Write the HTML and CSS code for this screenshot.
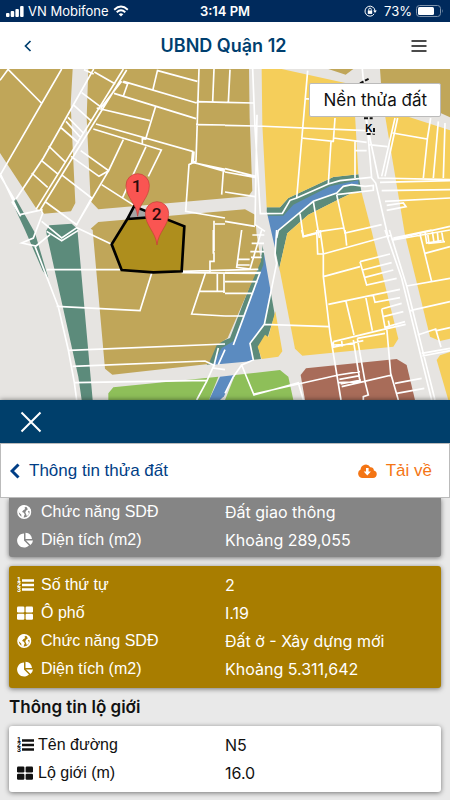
FILE: index.html
```html
<!DOCTYPE html>
<html lang="vi">
<head>
  <meta charset="UTF-8">
  <meta name="viewport" content="width=device-width, initial-scale=1.0">
  <title>UBND Quận 12</title>
  <link rel="stylesheet" href="styles.css">
</head>
<body>
  <svg class="sprite" aria-hidden="true">
    <symbol id="icon-list" viewBox="0 0 17 16">
      <g font-family="Liberation Sans" font-weight="bold" font-size="7" fill="currentColor">
        <text x="0" y="5">1</text><text x="0" y="10">2</text><text x="0" y="15">3</text>
      </g>
      <path d="M5 3.500h12M5 8h12M5 12.500h12" stroke="currentColor" stroke-width="2.400"/>
    </symbol>
    <symbol id="icon-grid" viewBox="0 0 17 16">
      <g fill="currentColor">
        <rect x="0" y="1.500" width="7.400" height="6" rx="1.200"/><rect x="8.600" y="1.500" width="7.400" height="6" rx="1.200"/>
        <rect x="0" y="8.700" width="7.400" height="6" rx="1.200"/><rect x="8.600" y="8.700" width="7.400" height="6" rx="1.200"/>
      </g>
    </symbol>
    <symbol id="icon-globe" viewBox="0 0 17 16">
      <circle cx="7.200" cy="8" r="6.200" fill="none" stroke="currentColor" stroke-width="1.600"/>
      <path d="M1.500 5.500Q3 1.500 7.500 1.300L9 2.800 7.400 3.700 8.300 5 6.300 6.200 5 8 6.500 8.500 7.800 10.200 7 12 6.600 13.800 4.500 13 4.200 10.500 2.200 8.800ZM10 3l2.500.6 1.300 2.200-.5 1.700-1.500-.7-1 .9 1.200 1.200-.5 2-1.700 1-.8-1.800L8.300 8.500 9 6.700l1.700-1.200Z" fill="currentColor"/>
    </symbol>
    <symbol id="icon-pie" viewBox="0 0 17 16">
      <path d="M7 1.500V8.500L12 13.500A7 7 0 1 1 7 1.500Z" fill="currentColor"/>
      <path d="M8.500 .8A7 7 0 0 1 15 7H8.500Z" fill="currentColor"/>
      <path d="M9 8.500H16A7 7 0 0 1 13.500 13Z" fill="currentColor"/>
    </symbol>
    <symbol id="icon-chevron" viewBox="0 0 10 16">
      <path d="M8.500 1.500 2 8l6.500 6.500" fill="none" stroke="currentColor" stroke-width="3"/>
    </symbol>
  </svg>

  <div class="app">
    <div class="status-bar">
      <div class="status-left">
        <svg class="signal" viewBox="0 0 18 11" aria-hidden="true">
          <g fill="#fff">
            <rect x="0" y="7" width="3.500" height="4" rx="1"/><rect x="4.700" y="5" width="3.500" height="6" rx="1"/>
            <rect x="9.400" y="3" width="3.500" height="8" rx="1"/><rect x="14.100" y="0" width="3.500" height="11" rx="1"/>
          </g>
        </svg>
        <span>VN Mobifone</span>
        <svg class="wifi" viewBox="0 0 16 12" aria-hidden="true">
          <path d="M1.200 4.700Q8-1.500 14.800 4.700M3.700 7.300Q8 3.300 12.300 7.300" fill="none" stroke="#fff" stroke-width="1.900"/>
          <path d="M5.700 9.200Q8 7.400 10.300 9.200L8 11.600Z" fill="#fff"/>
        </svg>
      </div>
      <span class="status-time">3:14 PM</span>
      <div class="status-right">
        <svg class="lock" viewBox="0 0 13 12" aria-hidden="true">
          <path d="M10.200 8.900A5 5 0 1 1 11 6" fill="none" stroke="#fff" stroke-width="1"/>
          <path d="M9.200 5.500h3.600L11 8Z" fill="#fff"/>
          <rect x="3.800" y="5.500" width="4.400" height="3.400" fill="#fff"/>
          <path d="M4.700 5.700V4.400a1.300 1.300 0 0 1 2.600 0v1.300" fill="none" stroke="#fff" stroke-width=".9"/>
        </svg>
        <span>73%</span>
        <svg class="battery" viewBox="0 0 28 12" aria-hidden="true">
          <rect x=".5" y=".5" width="24" height="11" rx="3" fill="none" stroke="#7f93ab"/>
          <rect x="2" y="2" width="16" height="8" rx="1.500" fill="#fff"/>
          <path d="M26 4q1.500 2 0 4Z" fill="#7f93ab"/>
        </svg>
      </div>
    </div>

    <header class="header">
      <button class="icon-button" aria-label="Quay lại">
        <svg width="16" height="16" viewBox="0 0 16 16"><path d="M10.500 3 5.500 8l5 5" fill="none" stroke="#003f6f" stroke-width="1.700"/></svg>
      </button>
      <h1>UBND Quận 12</h1>
      <button class="icon-button" aria-label="Menu">
        <svg width="16" height="16" viewBox="0 0 16 16"><path d="M.5 3h15M.5 8h15M.5 13h15" stroke="#111" stroke-width="1.500"/></svg>
      </button>
    </header>

    <div class="map">
      <svg class="map-canvas" viewBox="0 3 1350 993" preserveAspectRatio="xMidYMid slice" aria-hidden="true">
        <rect y="3" width="1350" height="993" fill="#e6e4e1"/>

        <!-- river banks and water -->
        <g fill="#5c8b7b">
          <path d="M800 418H840L865 390 1000 327 1075 319 1085 374 1055 376 1020 392 925 440 862 496 838 600 828 730 803 808 775 836 783 873 620 890 650 826 690 810 785 560Z"/>
          <path d="M35 400 48 393 105 495 145 631 128 608 75 486Z"/>
          <path d="M138 490 148 472 215 467 232 482 278 996H245L235 926Z"/>
        </g>
        <path d="M800 443H850L880 410 990 355 1075 337V349L1028 353 1010 373 940 400 900 430 835 485 826 550 830 586 815 666 790 771 750 826 760 879 638 890 665 840 700 820 790 590Z" fill="#5b8bc0"/>
        <path d="M660 926 705 921 672 985 660 996H627Z" fill="#5b8bc0"/>
        <path d="M747 3H785L800 430 825 540 885 842 910 866 847 870 790 545 765 445Z" fill="#e6e4e1"/>

        <!-- land use zones -->
        <g fill="#c0a659">
          <path d="M0 3H218L212 110 226 405 213 430 132 437 108 420 0 255Z"/>
          <path d="M265 3H747L749 150 757 368 745 385 295 424 272 400 260 150Z"/>
          <path d="M272 482 295 462 735 424 765 440 770 500 783 580 683 810 650 832 626 888 337 920 315 902 278 486Z"/>
          <path d="M1140 3H1350V148L1310 130 1145 75ZM985 3H1060L1037 20Z"/>
        </g>
        <g fill="#f5ce5a">
          <path d="M785 3H845L1060 50 1075 319 1000 327 865 390 840 418H800L787 170Z"/>
          <path d="M1153 130 1220 145 1350 187V812L1320 819 1290 806 1215 500Z"/>
          <path d="M1350 852 1320 862 1310 876 1345 996H1350Z"/>
          <path d="M1085 374 1055 376 1020 392 925 440 862 496 838 600 885 842 907 863 1180 836 1195 812 1115 490Z"/>
          <path d="M826 730 847 850 835 866 785 873 773 836 795 800 805 807Z"/>
        </g>
        <path d="M340 958 655 926 627 996H325V976ZM705 921 840 906 865 926 880 996H675Z" fill="#8ebf59"/>
        <path d="M915 996 902 921 918 901 1190 873 1220 891 1245 996Z" fill="#a86c59"/>

        <!-- parcel borders -->
        <g fill="none" stroke="#fff" stroke-width="5">
          <path d="M0 37 25 3M25 5 124 105M185 3 0 322 45 397M0 315 62 445 35 400M281 3 130 270 48 393M370 3 108 424M380 6 122 424 128 436 100 510 65 525 108 534 150 500M245 74 304 118 365 40M222 112 275 160M283 12 346 48M252 5 281 18M204 148 250 195M198 160 240 207M184 180 236 225M146 234 197 283M124 277 172 317M95 315 143 358M137 402 230 470 275 390M213 265 297 325 326 308M187 322 275 390M242 248 326 308 370 215M230 470 326 308M280 183 484 246 445 325M288 168 578 250 575 283 675 304M305 350 402 412M438 236 368 388M290 120 450 158M342 76 588 152M370 40 590 105M368 42 383 47 370 84M473 5 458 68M473 8 592 40M467 115 437 213 427 212V226M597 3 588 280 567 290 557 430 675 450M588 170 675 171M590 101 675 103M642 3 638 101M582 250 580 283 675 310M670 310 665 380M642 458V550M645 468H675"/>
          <path d="M60 440 128 425M125 460 185 510 232 478M140 490 185 518 235 487M105 535 175 717 205 846 223 944 230 996M232 480 335 529M140 605H365M545 610 775 604M545 614 780 616M170 715 420 728 455 616M616 616 575 738 675 744M600 670H675M652 616V670M672 616V675M640 486V555H642V580H630V612M208 847 675 828M218 895 615 879 645 893M225 944 620 937M645 885 620 940 590 996M655 840 640 900 675 905M675 845 655 890"/>
          <path d="M15 5 10 103M0 103 85 105M0 172 97 174 425 188M83 3 90 180 106 437 172 436 195 397 215 390 310 348 345 338 437 328M96 140 90 470 120 490M248 8 215 390M240 92 265 94M228 210 325 220 330 150M325 210 425 223M318 220 310 348M390 220V330M390 248H425M412 3 440 330 452 345 490 510M422 150 460 330 675 335M0 302 93 325M0 312 90 328M0 372 90 386M510 150 470 325M518 150 480 325M503 195 607 213 617 150M430 230 487 236M607 213 595 330M640 160 625 330M660 165 655 330M465 343 675 338M470 368 675 365M480 400 675 390M485 412 535 405 543 416 485 427M155 510 160 487 225 433 265 400 335 375 355 355 380 350 420 355 445 352V367L335 380M225 437 235 505 290 490M265 400 283 510M335 380 360 495 470 470M285 490 355 480M500 515 675 475M600 490 605 525 650 518M0 460 90 475" transform="translate(675)"/>
          <path d="M50 0 35 112 75 117 110 0M82 15H118M80 40H117M76 65H118M78 82H110M40 88H74M38 105H74M0 128H105L25 345M0 155H98M0 190H85M0 258H58M155 0 150 75 155 100 118 283 75 340 85 390 50 405 87 495 220 458 235 510M25 440 0 490M50 405 25 440M118 283 312 290M285 0 295 70 295 140 315 310 348 510M230 0 235 20 275 10M275 0 278 72 295 72 500 15M360 0 365 47M295 140 405 110M405 95 495 72M405 95 425 165 515 145M413 120 500 98M420 142 505 120M310 223 525 178M362 210 387 315M422 200 442 302M445 197 450 217 525 203M470 237 530 220M470 237 480 292 540 275M475 260 535 245M490 272 493 286M325 335 460 302 542 283M325 335V352L415 332M327 345 390 342M350 333 352 350M397 325 480 310M485 292 497 430 520 510M385 330 405 455 340 458M397 325 420 455 430 495 415 500V510M87 492 340 435 405 425M350 470 415 455 500 435M343 448 405 437M347 462 408 450M510 460 590 445M515 490 598 475M480 0 530 145 620 510M493 0 545 168 595 370 630 510M505 30 675 0M505 24 620 0M585 12 620 155M600 70 675 50M608 10 612 40 660 35M622 5 627 37M637 5 640 37M650 5 655 35M545 168 675 145M555 242 675 215M578 315 632 297 648 352M635 302 675 293M590 370 675 355M592 378 675 362" transform="translate(675 486)"/>
        </g>

        <!-- street name -->
        <g stroke="#111" stroke-width="6" stroke-dasharray="12 5">
          <path d="M1080 46 1107 32M1092 151H1118M1100 198H1118M1122 180V200"/>
        </g>
        <text class="street-name" x="1096" y="192">K</text>

        <!-- selected parcel -->
        <path d="M382 453 335 529 365 606 460 613 545 610 553 475 402 415Z" fill="#ae8e1d"/>
        <path d="M402 415 480 446 382 453Z" fill="#a5a5a5"/>
        <path d="M382 453 335 529 365 606 460 613 545 610 553 475 402 415ZM382 453 480 446" fill="none" stroke="#000" stroke-width="8"/>

        <g stroke="#c43c38" stroke-width="2" fill="#fa5552">
          <path d="M413 445C409 405 378 390 378 352A35 35 0 0 1 448 352C448 390 417 405 413 445Z"/>
          <path d="M471 531C467 491 436 474 436 436A35 35 0 0 1 506 436C506 474 475 491 471 531Z"/>
        </g>
        <text class="pin-label" x="410" y="373">1</text>
        <text class="pin-label" x="470" y="456">2</text>
      </svg>
      <button class="layer-button">Nền thửa đất</button>
    </div>

    <section class="panel">
      <div class="panel-bar">
        <button class="close-button" aria-label="Đóng">
          <svg width="22" height="22" viewBox="0 0 22 22"><path d="M1.500 1.500l19 19M20.500 1.500l-19 19" stroke="#fff" stroke-width="2"/></svg>
        </button>
      </div>
      <div class="panel-header">
        <a class="back-link" href="#">
          <svg width="10" height="16"><use href="#icon-chevron"/></svg>
          Thông tin thửa đất
        </a>
        <a class="download-link" href="#">
          <svg width="19" height="14" viewBox="0 0 19 14" aria-hidden="true">
            <path d="M4.500 14A4.500 4.500 0 0 1 2.600 5.500 5.200 5.200 0 0 1 12.300 3.200 3 3 0 0 1 15.800 6.500 3.800 3.800 0 0 1 15 14Z" fill="currentColor"/>
            <path d="M8 4h2.600v3.500h2.300L9.300 11.500 5.700 7.500H8Z" fill="#fff"/>
          </svg>
          Tải về
        </a>
      </div>

      <div class="panel-body">
        <dl class="card card-gray">
          <div class="row">
            <dt><svg class="icon"><use href="#icon-globe"/></svg>Chức năng SDĐ</dt>
            <dd>Đất giao thông</dd>
          </div>
          <div class="row">
            <dt><svg class="icon"><use href="#icon-pie"/></svg>Diện tích (m2)</dt>
            <dd>Khoảng 289,055</dd>
          </div>
        </dl>

        <dl class="card card-gold">
          <div class="row">
            <dt><svg class="icon"><use href="#icon-list"/></svg>Số thứ tự</dt>
            <dd>2</dd>
          </div>
          <div class="row">
            <dt><svg class="icon"><use href="#icon-grid"/></svg>Ô phố</dt>
            <dd>I.19</dd>
          </div>
          <div class="row">
            <dt><svg class="icon"><use href="#icon-globe"/></svg>Chức năng SDĐ</dt>
            <dd>Đất ở - Xây dựng mới</dd>
          </div>
          <div class="row">
            <dt><svg class="icon"><use href="#icon-pie"/></svg>Diện tích (m2)</dt>
            <dd>Khoảng 5.311,642</dd>
          </div>
        </dl>

        <h2>Thông tin lộ giới</h2>

        <dl class="card card-white">
          <div class="row">
            <dt><svg class="icon"><use href="#icon-list"/></svg>Tên đường</dt>
            <dd>N5</dd>
          </div>
          <div class="row">
            <dt><svg class="icon"><use href="#icon-grid"/></svg>Lộ giới (m)</dt>
            <dd>16.0</dd>
          </div>
        </dl>
      </div>
    </section>
  </div>
</body>
</html>
```

FILE: styles.css
```css
* {
    box-sizing: border-box;
}

body {
    margin: 0;
    font-family: Inter, 'Liberation Sans', sans-serif;
    font-size: 16px;
    color: #111;
    background: #e9e9e9;
}

button {
    padding: 0;
    border: none;
    background: none;
    font-family: inherit;
    cursor: pointer;
}

a {
    text-decoration: none;
}

svg {
    display: block;
    flex-shrink: 0;
}

.sprite {
    display: none;
}

.app {
    display: flex;
    flex-direction: column;
    min-height: 100vh;
}

/* status bar */
.status-bar {
    display: grid;
    grid-template-columns: 1fr auto 1fr;
    align-items: center;
    height: 22px;
    padding: 0 6px;
    background: #002a5c;
    color: #fff;
    font-size: 13px;
}

.status-left,
.status-right {
    display: flex;
    align-items: center;
    gap: 4px;
}

.status-right {
    justify-content: flex-end;
}

.status-time {
    font-weight: 600;
}

.signal {
    width: 18px;
    height: 11px;
}

.wifi {
    width: 16px;
    height: 12px;
}

.lock {
    width: 13px;
    height: 12px;
    margin-right: 3px;
}

.battery {
    width: 28px;
    height: 12px;
}

/* header */
.header {
    display: flex;
    align-items: center;
    justify-content: space-between;
    height: 47px;
    padding: 0 11px 0 8px;
    background: #fff;
}

.header h1 {
    margin: 0;
    font-size: 18px;
    font-weight: 600;
    color: #003f6f;
}

.icon-button {
    display: flex;
    align-items: center;
    justify-content: center;
    width: 40px;
    height: 40px;
}

/* map */
.map {
    position: relative;
    flex: 1 0 331px;
    overflow: hidden;
}

.map-canvas {
    position: absolute;
    width: 100%;
    height: 100%;
}

.pin-label {
    font-family: Roboto, sans-serif;
    font-size: 52px;
    font-weight: 500;
    text-anchor: middle;
    fill: #2b0b0b;
}

.street-name {
    font-family: 'Liberation Sans', sans-serif;
    font-size: 30px;
    font-weight: bold;
}

.layer-button {
    position: absolute;
    top: 14px;
    right: 9px;
    height: 34px;
    padding: 0 13px;
    border: 1px solid #bbb;
    border-radius: 2px;
    background: #fff;
    color: #111;
    font-size: 17px;
}

/* bottom panel */
.panel {
    position: relative;
    box-shadow: 0 0 5px rgba(0, 0, 0, 0.5);
}

.panel-bar {
    display: flex;
    align-items: center;
    height: 43px;
    padding: 0 20px;
    background: #003f6b;
}

.panel-header {
    position: relative;
    display: flex;
    align-items: center;
    justify-content: space-between;
    height: 55px;
    padding: 0 17px 0 9px;
    border: 1px solid #bbb;
    background: #fff;
    font-family: 'Liberation Sans', sans-serif;
    font-size: 17px;
}

.back-link,
.download-link {
    display: flex;
    align-items: center;
    gap: 9px;
    color: #003e86;
}

.download-link {
    color: #f47514;
}

.panel-body {
    padding: 0 9px 9px;
    background: #e9e9e9;
}

.card {
    margin: 0;
    padding: 5px 0;
    border-radius: 3px;
    color: #fff;
    box-shadow: 0 1px 5px rgba(0, 0, 0, 0.5);
}

.card-gray {
    margin-bottom: 9px;
    padding: 0 0 3px;
    border-radius: 0 0 3px 3px;
    background: #858585;
}

.card-gold {
    background: #a87d00;
}

.card-white {
    background: #fff;
    color: #111;
}

.row {
    display: grid;
    grid-template-columns: 1fr 1fr;
    align-items: center;
    height: 28px;
}

.row dt {
    display: flex;
    align-items: center;
    gap: 7px;
    padding-left: 8px;
    font-family: 'Liberation Sans', sans-serif;
}

.row dd {
    margin: 0;
}

.card-white dt {
    gap: 4px;
}

.icon {
    width: 17px;
    height: 16px;
}

.panel-body h2 {
    margin: 0;
    font-size: 17px;
    font-weight: 600;
    line-height: 38px;
}
```
